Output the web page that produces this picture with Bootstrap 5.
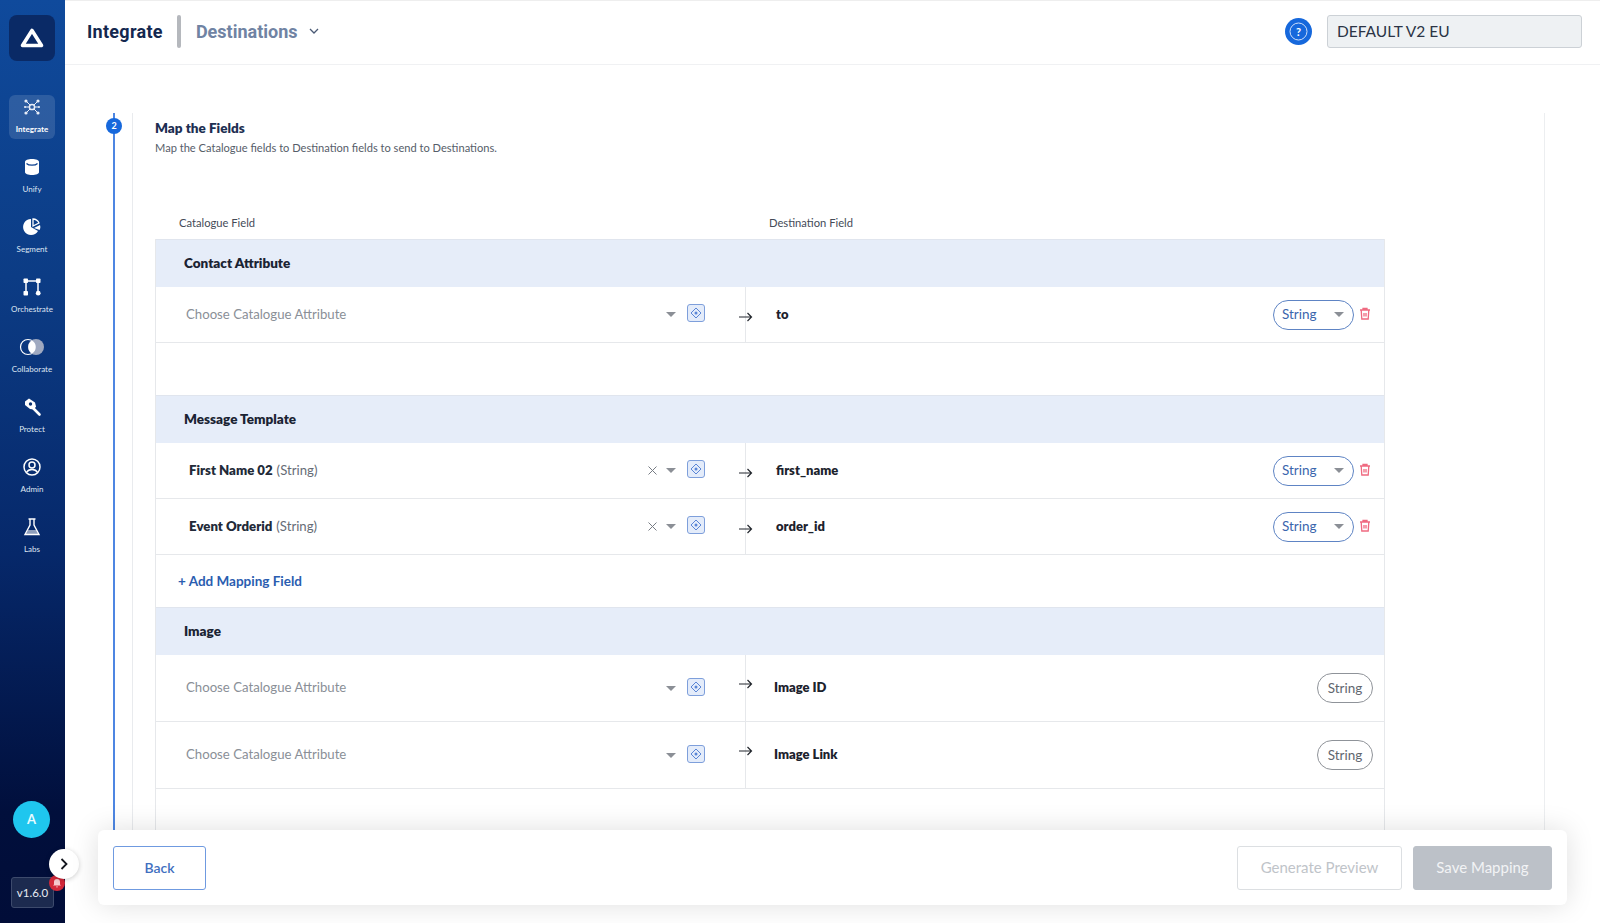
<!DOCTYPE html>
<html lang="en">
<head>
  <meta charset="UTF-8">
  <meta name="viewport" content="width=device-width, initial-scale=1.0">
  <title>Integrate - Destinations</title>
  <link href="https://cdn.jsdelivr.net/npm/bootstrap@5.3.0/dist/css/bootstrap.min.css" rel="stylesheet">
  <style>
    body, html {
      height: 100%;
      margin: 0;
      overflow: hidden;
      font-family: "Lato", "Noto Sans", sans-serif;
      background: #fff;
      color: #1b2230;
    }
    .app-shell { height: 923px; position: relative; }

    /* sidebar */
    .side-bar {
      width: 65px;
      flex: none;
      background: linear-gradient(180deg, #0f4a9c 0%, #0c3c85 30%, #06286a 60%, #010f3c 88%, #010d38 100%);
      padding-top: 15px;
    }
    .logo-box {
      width: 46px;
      height: 46px;
      margin: 0 0 34px 9px;
      border-radius: 8px;
      background: #0a2a66;
    }
    .side-item {
      width: 46px;
      height: 44px;
      margin: 0 0 16px 9px;
      border-radius: 6px;
      color: #dfe6f3;
      font-size: 8px;
      line-height: 10px;
      padding-top: 2px;
      white-space: nowrap;
    }
    .side-item svg { display: block; margin-bottom: 7px; }
    .side-item.is-active { background: rgba(255,255,255,.13); color: #fff; font-weight: 700; }
    .side-bottom { padding-bottom: 15px; }
    .avatar-dot {
      width: 37px;
      height: 37px;
      margin-left: 13px;
      margin-bottom: 39px;
      border-radius: 50%;
      background: #1fc6ee;
      color: #e8fbff;
      font-size: 13px;
      font-weight: 700;
    }
    .version-tag {
      width: 43px;
      height: 31px;
      margin-left: 11px;
      border: 1px solid #3d4a6c;
      border-radius: 3px;
      background: #1c2a4f;
      color: #e8ebf2;
      font-size: 11.5px;
    }
    .bell-dot {
      position: absolute;
      left: 49px;
      top: 875px;
      width: 16px;
      height: 16px;
      border-radius: 50%;
      background: #d3283a;
    }
    .toggle-dot {
      position: absolute;
      left: 49px;
      top: 849px;
      width: 30px;
      height: 30px;
      border-radius: 50%;
      background: #fff;
      box-shadow: 0 1px 5px rgba(0,0,0,.2);
    }

    /* top bar */
    .top-bar {
      height: 65px;
      flex: none;
      border-top: 1px solid #eee;
      border-bottom: 1px solid #f0f1f3;
      padding: 0 18px 3px 22px;
    }
    .crumb-main {
      font-family: "Roboto", sans-serif;
      font-size: 18px;
      font-weight: 700;
      letter-spacing: .3px;
      color: #14284f;
    }
    .crumb-sep { width: 4px; height: 33px; margin: 0 15px 0 14px; background: #b5b8bd; border-radius: 2px; }
    .crumb-sub {
      font-family: "Roboto", sans-serif;
      font-size: 18px;
      font-weight: 700;
      color: #7083a3;
      margin-right: 11px;
    }
    .help-dot {
      width: 27px;
      height: 27px;
      margin-right: 15px;
      border-radius: 50%;
      background: #1668dc;
    }
    .workspace-box {
      width: 255px;
      height: 33px;
      padding: 0 9px;
      line-height: 31px;
      font-size: 15.5px;
      color: #2b3445;
      background: #eef1f3;
      border: 1px solid #ccd1d6;
      border-radius: 3px;
    }

    /* step */
    .step-area { flex: 1; min-height: 0; padding: 48px 55px 50px 48px; }
    .step-line { width: 2px; flex: none; margin-right: 17px; background: #4d86e2; position: relative; }
    .step-num {
      position: absolute;
      left: -7px;
      top: 5px;
      width: 16px;
      height: 16px;
      border-radius: 50%;
      background: #1668dc;
      color: #fff;
      font-size: 9px;
      font-weight: 700;
    }
    .step-panel {
      flex: 1;
      min-width: 0;
      overflow: hidden;
      border-left: 1px solid #e9ebee;
      border-right: 1px solid #eceef0;
      padding: 3px 159px 0 22px;
    }
    .step-title { font-size: 13.5px; font-weight: 800; color: #1d2f52; line-height: 18px; margin-top: 3px; }
    .step-desc { font-size: 11.1px; color: #565d69; line-height: 16px; margin-top: 3px; margin-bottom: 59px; }
    .col-heads { font-size: 11.2px; color: #444b57; height: 24px; line-height: 16px; }
    .col-heads span:first-child { margin-left: 24px; width: 590px; }

    /* mapping table */
    .map-table { border: 1px solid #e6e8eb; border-bottom: 0; border-top: 0; }
    .map-head {
      height: 48px;
      background: #e6edf9;
      border-top: 1px solid #e0e5ee;
      padding-left: 28px;
      font-size: 13.5px;
      font-weight: 800;
      color: #1a2333;
    }
    .map-row { height: 56px; border-bottom: 1px solid #e6e8eb; }
    .map-row.tall { height: 67px; }
    .map-spacer { height: 52px; }
    .map-left { width: 589px; flex: none; padding: 0 40px 0 30px; font-size: 13.2px; height: 100%; }
    .map-left.is-filled { padding-left: 33px; }
    .map-left .hint { color: #8a8f97; }
    .map-left b { color: #222a38; font-weight: 800; }
    .map-left .kind { color: #666c76; margin-left: 4px; }
    .caret-down {
      width: 0;
      height: 0;
      border-left: 5px solid transparent;
      border-right: 5px solid transparent;
      border-top: 5px solid #8b8f96;
      margin: 0 11px 0 9px;
    }
    .attr-btn {
      width: 18px;
      height: 18px;
      margin-top: -3px;
      border: 1px solid #7e9fdb;
      border-radius: 3px;
      background: #e4ecfa;
    }
    .map-right { height: 100%; flex: 1; border-left: 1px solid #e6e8eb; padding: 0 11px 0 30px; position: relative; font-size: 13px; font-weight: 800; color: #1c222d; }
    .map-right.no-pad { padding-left: 28px; }
    .flow-arrow { position: absolute; left: -7px; top: 50%; margin-top: -3px; }
    .tall .flow-arrow { margin-top: -9px; }
    .type-pill {
      width: 81px;
      height: 30px;
      padding: 0 9px 0 8px;
      border: 1px solid #5e84c4;
      border-radius: 15px;
      font-size: 13.5px;
      font-weight: 400;
      color: #3b66ad;
    }
    .type-pill .caret-down { margin: 0; }
    .type-pill.is-fixed { width: 56px; padding: 0; border-color: #8f9399; color: #62676f; justify-content: center; }
    .trash-btn { margin: -3px 2px 0 5px; }
    .add-row { height: 52px; padding-left: 22px; font-size: 13.5px; font-weight: 700; color: #2a5db0; }

    /* footer */
    .foot-bar {
      position: absolute;
      left: 98px;
      top: 830px;
      width: 1469px;
      height: 75px;
      padding: 0 15px;
      background: #fff;
      border-radius: 6px;
      box-shadow: 0 0 28px rgba(0,0,0,.13);
    }
    .btn-back {
      width: 93px;
      height: 44px;
      font-size: 14px;
      font-weight: 600;
      color: #3f6fc0;
      border: 1.5px solid #6f9ae0;
      border-radius: 3px;
      background: #fff;
    }
    .btn-preview {
      --bs-btn-disabled-color: #c0c4c9;
      --bs-btn-disabled-bg: #fff;
      --bs-btn-disabled-border-color: #dcdfe2;
      --bs-btn-disabled-opacity: 1;
      width: 165px;
      height: 44px;
      margin-right: 11px;
      font-size: 15px;
      border-width: 1.5px;
      border-radius: 3px;
    }
    .btn-save {
      --bs-btn-disabled-color: #f2f3f5;
      --bs-btn-disabled-bg: #bcc1c8;
      --bs-btn-disabled-border-color: #bcc1c8;
      --bs-btn-disabled-opacity: 1;
      width: 139px;
      height: 44px;
      font-size: 15px;
      border-radius: 3px;
    }
  </style>
</head>
<body>
  <div class="app-shell d-flex">
    <!-- Sidebar -->
    <aside class="side-bar d-flex flex-column">
      <div class="logo-box d-flex align-items-center justify-content-center">
        <svg width="26" height="24" viewBox="0 0 26 24"><path d="M13 4.500 L22.500 19.500 H3.500 Z" fill="none" stroke="#fff" stroke-width="3.600" stroke-linejoin="round"/></svg>
      </div>
      <div class="side-item is-active d-flex flex-column align-items-center">
        <svg width="20" height="20" viewBox="0 0 20 20" fill="none" stroke="#e8edf7" stroke-width="1"><circle cx="10" cy="10" r="2.600" stroke-width="1.500"/><path d="M4 4l4 4M16 4l-4 4M4 16l4-4M16 16l-4-4M3 10h4.400M12.600 10h4.400"/><g fill="#e8edf7" stroke="none"><circle cx="4" cy="4" r="1.600"/><circle cx="16" cy="4" r="1.600"/><circle cx="4" cy="16" r="1.600"/><circle cx="16" cy="16" r="1.600"/><circle cx="3" cy="10" r="1"/><circle cx="17" cy="10" r="1"/></g></svg>
        Integrate
      </div>
      <div class="side-item d-flex flex-column align-items-center">
        <svg width="20" height="20" viewBox="0 0 20 20"><path d="M3 5c0-2 3-3 7-3s7 1 7 3v10c0 2-3 3-7 3s-7-1-7-3z" fill="#fff"/><path d="M4.500 6.500c1 1 3 1.700 5.500 1.700s4.500-.7 5.500-1.700" fill="none" stroke="#0d4190" stroke-width="1.200"/></svg>
        Unify
      </div>
      <div class="side-item d-flex flex-column align-items-center">
        <svg width="20" height="20" viewBox="0 0 20 20"><path d="M9 2a8 8 0 1 0 7 12l-7-4z" fill="#fff"/><path d="M11 2a7 7 0 0 1 6 4l-6 3z" fill="none" stroke="#fff" stroke-width="1.300"/><path d="M12 11l6-3c.6 2 .4 3.500-.4 5z" fill="#fff"/></svg>
        Segment
      </div>
      <div class="side-item d-flex flex-column align-items-center">
        <svg width="20" height="20" viewBox="0 0 20 20" fill="#fff"><path d="M4 16V4h12v12" fill="none" stroke="#fff" stroke-width="1.500"/><rect x="1.500" y="1.500" width="4.500" height="4.500" rx=".8"/><rect x="14" y="1.500" width="4.500" height="4.500" rx=".8"/><rect x="1.500" y="14" width="4.500" height="4.500" rx=".8"/><circle cx="16.200" cy="16.200" r="2.400"/></svg>
        Orchestrate
      </div>
      <div class="side-item d-flex flex-column align-items-center">
        <svg width="26" height="20" viewBox="0 0 26 20"><circle cx="9" cy="10" r="7.500" fill="none" stroke="#fff" stroke-width="1.200"/><circle cx="17" cy="10" r="8" fill="#9fa9c0"/><path d="M13 3.500a7.500 7.500 0 0 1 0 13a7.500 7.500 0 0 1 0-13z" fill="#fff"/></svg>
        Collaborate
      </div>
      <div class="side-item d-flex flex-column align-items-center">
        <svg width="20" height="20" viewBox="0 0 20 20"><path d="M3 4.500L7 1.500l6 4 1 4-2 3-4-.5L3 8z" fill="#fff"/><path d="M11.500 11.500l6 6" stroke="#fff" stroke-width="2.600" stroke-linecap="round"/><circle cx="8.500" cy="7" r="1.700" fill="#0a3273"/></svg>
        Protect
      </div>
      <div class="side-item d-flex flex-column align-items-center">
        <svg width="20" height="20" viewBox="0 0 20 20" fill="none" stroke="#fff" stroke-width="1.500"><circle cx="10" cy="10" r="8"/><circle cx="10" cy="8" r="3"/><path d="M4.500 15.500c1-2 3-3 5.500-3s4.500 1 5.500 3"/></svg>
        Admin
      </div>
      <div class="side-item d-flex flex-column align-items-center">
        <svg width="20" height="20" viewBox="0 0 20 20" fill="none" stroke="#fff" stroke-width="1.400"><path d="M6.500 2h7M8 2v6l-5 9.500h14L12 8V2"/><path d="M6 13h8l2.500 4.500h-13z" fill="#fff" fill-opacity=".55" stroke="none"/></svg>
        Labs
      </div>
      <div class="side-bottom mt-auto">
        <div class="avatar-dot d-flex align-items-center justify-content-center">A</div>
        <div class="version-tag d-flex align-items-center justify-content-center">v1.6.0</div>
      </div>
    </aside>
    <div class="bell-dot d-flex align-items-center justify-content-center">
      <svg width="10" height="10" viewBox="0 0 10 10"><path d="M5 1a3 3 0 0 1 3 3v2.500l1 1H1l1-1V4a3 3 0 0 1 3-3zM4 8.500h2a1 1 0 0 1-2 0z" fill="#f7c9ce"/></svg>
    </div>
    <div class="toggle-dot d-flex align-items-center justify-content-center">
      <svg width="10" height="14" viewBox="0 0 10 14"><path d="M2.500 2l5 5-5 5" fill="none" stroke="#14171f" stroke-width="1.800"/></svg>
    </div>

    <!-- Main -->
    <main class="flex-grow-1 d-flex flex-column" style="min-width:0">
      <header class="top-bar d-flex align-items-center">
        <span class="crumb-main">Integrate</span>
        <span class="crumb-sep"></span>
        <span class="crumb-sub">Destinations</span>
        <svg width="10" height="6" viewBox="0 0 10 6"><path d="M1 1l4 4 4-4" fill="none" stroke="#4a5a75" stroke-width="1.300"/></svg>
        <div class="help-dot ms-auto d-flex align-items-center justify-content-center">
          <svg width="19" height="19" viewBox="0 0 19 19"><circle cx="9.500" cy="9.500" r="8.500" fill="none" stroke="#cfe0fa" stroke-width="1"/><text x="9.500" y="13.500" text-anchor="middle" font-size="11" font-weight="700" fill="#fff" font-family="Lato, sans-serif">?</text></svg>
        </div>
        <div class="workspace-box form-control">DEFAULT V2 EU</div>
      </header>

      <div class="step-area d-flex" style="min-height:0">
        <div class="step-line"><span class="step-num d-flex align-items-center justify-content-center">2</span></div>
        <section class="step-panel">
          <div class="step-title">Map the Fields</div>
          <div class="step-desc">Map the Catalogue fields to Destination fields to send to Destinations.</div>
          <div class="col-heads d-flex"><span>Catalogue Field</span><span>Destination Field</span></div>

          <div class="map-table">
            <div class="map-head d-flex align-items-center">Contact Attribute</div>
            <div class="map-row d-flex align-items-center">
              <div class="map-left d-flex align-items-center"><span class="hint me-auto">Choose Catalogue Attribute</span><span class="caret-down"></span><span class="attr-btn d-flex align-items-center justify-content-center"><svg width="12" height="12" viewBox="0 0 12 12"><path d="M6 1l5 5-5 5-5-5z" fill="none" stroke="#5b86d6"/><circle cx="6" cy="6" r="1.500" fill="#5b86d6"/></svg></span></div>
              <div class="map-right d-flex align-items-center"><svg class="flow-arrow" width="14" height="10" viewBox="0 0 14 10"><path d="M0 5h12.500M8.500 1l4 4-4 4" fill="none" stroke="#23272e" stroke-width="1.200"/></svg>to<div class="type-pill ms-auto d-flex align-items-center justify-content-between">String<span class="caret-down"></span></div><svg class="trash-btn" width="12" height="13" viewBox="0 0 12 13"><path d="M1 3h10M4 3V1.500h4V3M2.200 3l.6 9h6.400l.6-9z M5 6v3.500M7 6v3.500" fill="none" stroke="#ef6a80" stroke-width="1.300"/></svg></div>
            </div>
            <div class="map-spacer"></div>

            <div class="map-head d-flex align-items-center">Message Template</div>
            <div class="map-row d-flex align-items-center">
              <div class="map-left is-filled d-flex align-items-center"><b>First Name 02</b><span class="kind me-auto">(String)</span><svg width="9" height="9" viewBox="0 0 9 9"><path d="M.5.5l8 8M8.500.5l-8 8" stroke="#777c84" stroke-width="1"/></svg><span class="caret-down"></span><span class="attr-btn d-flex align-items-center justify-content-center"><svg width="12" height="12" viewBox="0 0 12 12"><path d="M6 1l5 5-5 5-5-5z" fill="none" stroke="#5b86d6"/><circle cx="6" cy="6" r="1.500" fill="#5b86d6"/></svg></span></div>
              <div class="map-right d-flex align-items-center"><svg class="flow-arrow" width="14" height="10" viewBox="0 0 14 10"><path d="M0 5h12.500M8.500 1l4 4-4 4" fill="none" stroke="#23272e" stroke-width="1.200"/></svg>first_name<div class="type-pill ms-auto d-flex align-items-center justify-content-between">String<span class="caret-down"></span></div><svg class="trash-btn" width="12" height="13" viewBox="0 0 12 13"><path d="M1 3h10M4 3V1.500h4V3M2.200 3l.6 9h6.400l.6-9z M5 6v3.500M7 6v3.500" fill="none" stroke="#ef6a80" stroke-width="1.300"/></svg></div>
            </div>
            <div class="map-row d-flex align-items-center">
              <div class="map-left is-filled d-flex align-items-center"><b>Event Orderid</b><span class="kind me-auto">(String)</span><svg width="9" height="9" viewBox="0 0 9 9"><path d="M.5.5l8 8M8.500.5l-8 8" stroke="#777c84" stroke-width="1"/></svg><span class="caret-down"></span><span class="attr-btn d-flex align-items-center justify-content-center"><svg width="12" height="12" viewBox="0 0 12 12"><path d="M6 1l5 5-5 5-5-5z" fill="none" stroke="#5b86d6"/><circle cx="6" cy="6" r="1.500" fill="#5b86d6"/></svg></span></div>
              <div class="map-right d-flex align-items-center"><svg class="flow-arrow" width="14" height="10" viewBox="0 0 14 10"><path d="M0 5h12.500M8.500 1l4 4-4 4" fill="none" stroke="#23272e" stroke-width="1.200"/></svg>order_id<div class="type-pill ms-auto d-flex align-items-center justify-content-between">String<span class="caret-down"></span></div><svg class="trash-btn" width="12" height="13" viewBox="0 0 12 13"><path d="M1 3h10M4 3V1.500h4V3M2.200 3l.6 9h6.400l.6-9z M5 6v3.500M7 6v3.500" fill="none" stroke="#ef6a80" stroke-width="1.300"/></svg></div>
            </div>
            <div class="add-row d-flex align-items-center">+ Add Mapping Field</div>

            <div class="map-head d-flex align-items-center">Image</div>
            <div class="map-row tall d-flex align-items-center">
              <div class="map-left d-flex align-items-center"><span class="hint me-auto">Choose Catalogue Attribute</span><span class="caret-down"></span><span class="attr-btn d-flex align-items-center justify-content-center"><svg width="12" height="12" viewBox="0 0 12 12"><path d="M6 1l5 5-5 5-5-5z" fill="none" stroke="#5b86d6"/><circle cx="6" cy="6" r="1.500" fill="#5b86d6"/></svg></span></div>
              <div class="map-right no-pad d-flex align-items-center"><svg class="flow-arrow" width="14" height="10" viewBox="0 0 14 10"><path d="M0 5h12.500M8.500 1l4 4-4 4" fill="none" stroke="#23272e" stroke-width="1.200"/></svg>Image ID<div class="type-pill is-fixed ms-auto d-flex align-items-center">String</div></div>
            </div>
            <div class="map-row tall d-flex align-items-center">
              <div class="map-left d-flex align-items-center"><span class="hint me-auto">Choose Catalogue Attribute</span><span class="caret-down"></span><span class="attr-btn d-flex align-items-center justify-content-center"><svg width="12" height="12" viewBox="0 0 12 12"><path d="M6 1l5 5-5 5-5-5z" fill="none" stroke="#5b86d6"/><circle cx="6" cy="6" r="1.500" fill="#5b86d6"/></svg></span></div>
              <div class="map-right no-pad d-flex align-items-center"><svg class="flow-arrow" width="14" height="10" viewBox="0 0 14 10"><path d="M0 5h12.500M8.500 1l4 4-4 4" fill="none" stroke="#23272e" stroke-width="1.200"/></svg>Image Link<div class="type-pill is-fixed ms-auto d-flex align-items-center">String</div></div>
            </div>
            <div class="map-spacer"></div>
          </div>
        </section>
      </div>
    </main>

    <div class="foot-bar d-flex align-items-center">
      <button class="btn btn-back">Back</button>
      <button class="btn btn-preview ms-auto" disabled>Generate Preview</button>
      <button class="btn btn-save" disabled>Save Mapping</button>
    </div>
  </div>
  <script src="https://cdn.jsdelivr.net/npm/bootstrap@5.3.0/dist/js/bootstrap.bundle.min.js"></script>
</body>
</html>
